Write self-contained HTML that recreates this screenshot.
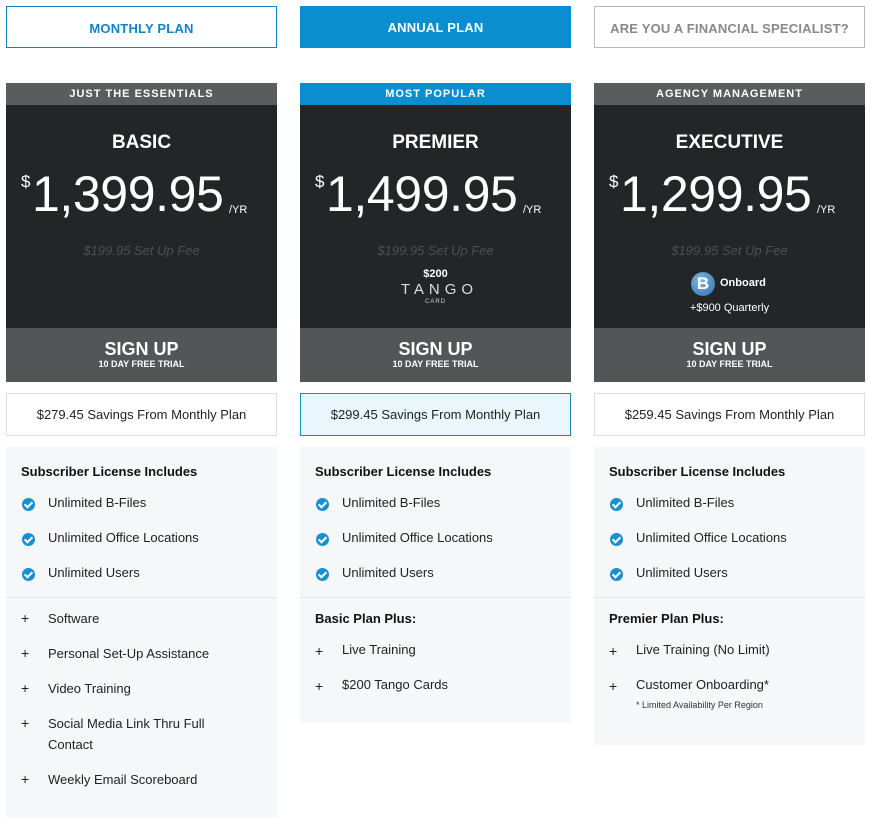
<!DOCTYPE html>
<html><head><style>
*{margin:0;padding:0;box-sizing:border-box}
body{width:873px;height:830px;background:#fff;font-family:"Liberation Sans",sans-serif;position:relative;overflow:hidden}
.a{position:absolute}
.btn{position:absolute;top:6px;width:271px;height:42px;font-weight:bold;font-size:13px;text-align:center;line-height:43px;letter-spacing:.2px}
.col{position:absolute;top:0;width:271px;height:830px}
.strip{top:83px;left:0;width:271px;height:22px;background:#5a5c5d;color:#fff;font-size:11px;font-weight:bold;text-align:center;line-height:22px;letter-spacing:1px}
.dark{top:105px;left:0;width:271px;height:223px;background:#232527}
.sign{top:328px;left:0;width:271px;height:54px;background:#535657;color:#fff;text-align:center}
.title{top:132px;left:0;width:271px;text-align:center;color:#fff;font-weight:bold;font-size:19px}
.dol{color:#fff;font-size:17px;top:172px}
.price{color:#fff;font-size:50px;top:165px;letter-spacing:-.4px}
.yr{color:#fff;font-size:11px;top:204px}
.fee{top:243px;left:0;width:271px;text-align:center;color:#4d5053;font-size:13px;font-style:italic}
.sav{top:393px;left:0;width:271px;height:43px;border:1px solid #dcdcdc;text-align:center;line-height:41px;font-size:13px;color:#222}
.feat{top:447px;left:0;width:271px;background:#f6f7f9}
.h{left:15px;font-weight:bold;font-size:13px;color:#111}
.it{left:42px;font-size:13px;color:#222;line-height:21px}
.ck{left:16px;width:13px;height:13px;border-radius:50%;background:#1a8fd0}
.ck:after{content:"";position:absolute;left:4px;top:2px;width:3px;height:6px;border:solid #fff;border-width:0 2px 2px 0;transform:rotate(45deg)}
.pl{left:15px;font-size:14px;color:#222}
.hr{left:0;width:271px;height:1px;background:#e2e4e6}
</style></head><body>
<div class="btn" style="left:6px;border:1px solid #1183c3;color:#1183c3">MONTHLY PLAN</div>
<div class="btn" style="left:300px;background:#0b8ecf;color:#fff">ANNUAL PLAN</div>
<div class="btn" style="left:594px;border:1px solid #b9b9b9;color:#888">ARE YOU A FINANCIAL SPECIALIST?</div>

<!-- col1 -->
<div class="col" style="left:6px">
<div class="a strip">JUST THE ESSENTIALS</div>
<div class="a dark"></div>
<div class="a title">BASIC</div>
<div class="a dol" style="left:15px">$</div>
<div class="a price" style="left:26px">1,399.95</div>
<div class="a yr" style="left:223px">/YR</div>
<div class="a fee">$199.95 Set Up Fee</div>
<div class="a sign"><div style="font-weight:bold;font-size:18px;padding-top:12px;line-height:18px">SIGN UP</div><div style="font-size:9px;font-weight:bold;line-height:12px">10 DAY FREE TRIAL</div></div>
<div class="a sav">$279.45 Savings From Monthly Plan</div>
<div class="a feat" style="height:371px">
<div class="a h" style="top:17px">Subscriber License Includes</div>
<div class="a ck" style="top:51px"></div><div class="a it" style="top:45px">Unlimited B-Files</div>
<div class="a ck" style="top:86px"></div><div class="a it" style="top:80px">Unlimited Office Locations</div>
<div class="a ck" style="top:121px"></div><div class="a it" style="top:115px">Unlimited Users</div>
<div class="a hr" style="top:150px"></div>
<div class="a pl" style="top:163px">+</div><div class="a it" style="top:161px">Software</div>
<div class="a pl" style="top:198px">+</div><div class="a it" style="top:196px">Personal Set-Up Assistance</div>
<div class="a pl" style="top:233px">+</div><div class="a it" style="top:231px">Video Training</div>
<div class="a pl" style="top:268px">+</div><div class="a it" style="top:266px">Social Media Link Thru Full<br>Contact</div>
<div class="a pl" style="top:324px">+</div><div class="a it" style="top:322px">Weekly Email Scoreboard</div>
</div>
</div>

<!-- col2 -->
<div class="col" style="left:300px">
<div class="a strip" style="background:#0b8ecf">MOST POPULAR</div>
<div class="a dark"></div>
<div class="a title">PREMIER</div>
<div class="a dol" style="left:15px">$</div>
<div class="a price" style="left:26px">1,499.95</div>
<div class="a yr" style="left:223px">/YR</div>
<div class="a fee">$199.95 Set Up Fee</div>
<div class="a" style="top:268px;left:0;width:271px;text-align:center;color:#fff;font-size:11px;font-weight:bold">$200</div>
<div class="a" style="top:281px;left:4px;width:271px;text-align:center;color:#ddd;font-size:15px;letter-spacing:5px">TANGO</div>
<div class="a" style="top:299px;left:0;width:271px;text-align:center;color:#ccc;font-size:6px;letter-spacing:1px">CARD</div>
<div class="a sign"><div style="font-weight:bold;font-size:18px;padding-top:12px;line-height:18px">SIGN UP</div><div style="font-size:9px;font-weight:bold;line-height:12px">10 DAY FREE TRIAL</div></div>
<div class="a sav" style="background:#e9f6fc;border-color:#1d8ab6">$299.45 Savings From Monthly Plan</div>
<div class="a feat" style="height:276px">
<div class="a h" style="top:17px">Subscriber License Includes</div>
<div class="a ck" style="top:51px"></div><div class="a it" style="top:45px">Unlimited B-Files</div>
<div class="a ck" style="top:86px"></div><div class="a it" style="top:80px">Unlimited Office Locations</div>
<div class="a ck" style="top:121px"></div><div class="a it" style="top:115px">Unlimited Users</div>
<div class="a hr" style="top:150px"></div>
<div class="a h" style="top:164px">Basic Plan Plus:</div>
<div class="a pl" style="top:196px">+</div><div class="a it" style="top:192px">Live Training</div>
<div class="a pl" style="top:231px">+</div><div class="a it" style="top:227px">$200 Tango Cards</div>
</div>
</div>

<!-- col3 -->
<div class="col" style="left:594px">
<div class="a strip">AGENCY MANAGEMENT</div>
<div class="a dark"></div>
<div class="a title">EXECUTIVE</div>
<div class="a dol" style="left:15px">$</div>
<div class="a price" style="left:26px">1,299.95</div>
<div class="a yr" style="left:223px">/YR</div>
<div class="a fee">$199.95 Set Up Fee</div>
<div class="a" style="top:272px;left:97px;width:24px;height:24px;border-radius:50%;background:radial-gradient(circle at 40% 35%,#7fb6e0,#2f6fae);color:#fff;font-weight:bold;font-size:17px;text-align:center;line-height:24px">B</div>
<div class="a" style="top:277px;left:126px;color:#fff;font-size:11px;font-weight:bold">Onboard</div>
<div class="a" style="top:302px;left:0;width:271px;text-align:center;color:#fff;font-size:11px">+$900 Quarterly</div>
<div class="a sign"><div style="font-weight:bold;font-size:18px;padding-top:12px;line-height:18px">SIGN UP</div><div style="font-size:9px;font-weight:bold;line-height:12px">10 DAY FREE TRIAL</div></div>
<div class="a sav">$259.45 Savings From Monthly Plan</div>
<div class="a feat" style="height:298px">
<div class="a h" style="top:17px">Subscriber License Includes</div>
<div class="a ck" style="top:51px"></div><div class="a it" style="top:45px">Unlimited B-Files</div>
<div class="a ck" style="top:86px"></div><div class="a it" style="top:80px">Unlimited Office Locations</div>
<div class="a ck" style="top:121px"></div><div class="a it" style="top:115px">Unlimited Users</div>
<div class="a hr" style="top:150px"></div>
<div class="a h" style="top:164px">Premier Plan Plus:</div>
<div class="a pl" style="top:196px">+</div><div class="a it" style="top:192px">Live Training (No Limit)</div>
<div class="a pl" style="top:231px">+</div><div class="a it" style="top:227px">Customer Onboarding*</div>
<div class="a" style="top:253px;left:42px;font-size:9px;color:#333">* Limited Availability Per Region</div>
</div>
</div>
</body></html>
